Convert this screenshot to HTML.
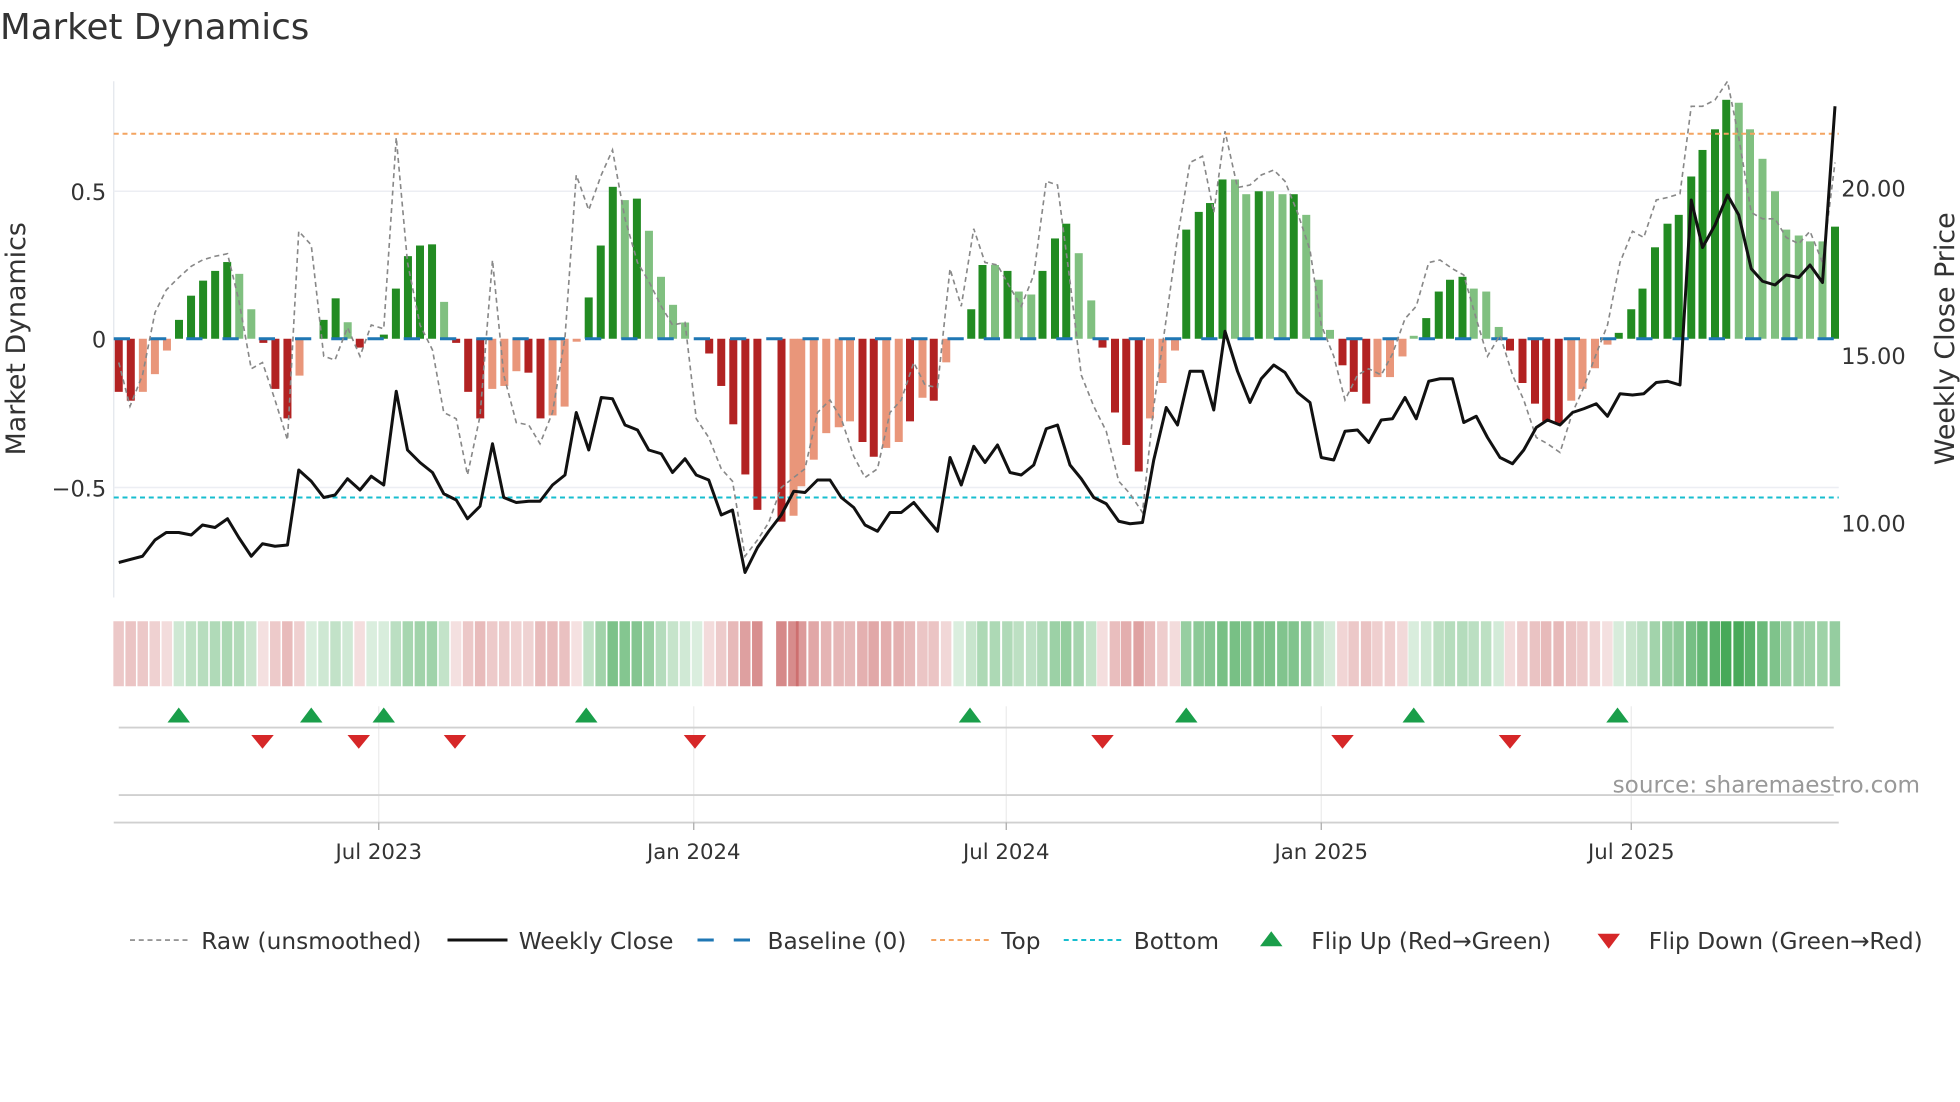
<!DOCTYPE html>
<html><head><meta charset="utf-8">
<style>
html,body{margin:0;padding:0;background:#fff;}
svg{display:block;}
text{font-family:"DejaVu Sans","Liberation Sans",sans-serif;fill:#333;}
</style></head>
<body>
<svg id="c" width="1960" height="1102" viewBox="0 0 1568 881.6" xmlns="http://www.w3.org/2000/svg">
<rect width="1568" height="882" fill="#fff"/>
<text x="0" y="31" font-size="28.5">Market Dynamics</text>
<line x1="91" y1="65" x2="91" y2="478" stroke="#e3e6ec" stroke-width="1"/>
<line x1="91" y1="153" x2="1471" y2="153" stroke="#eceef3" stroke-width="1.2"/>
<line x1="91" y1="390" x2="1471" y2="390" stroke="#eceef3" stroke-width="1.2"/>
<g id="bars"></g>
<line x1="91" y1="271" x2="1471" y2="271" stroke="#1f77b4" stroke-width="2.4" stroke-dasharray="13,16"/>
<line x1="91" y1="107" x2="1471" y2="107" stroke="#f4a460" stroke-width="1.6" stroke-dasharray="4,3"/>
<line x1="91" y1="398" x2="1471" y2="398" stroke="#17becf" stroke-width="1.6" stroke-dasharray="4,3"/>
<polyline id="raw" fill="none" stroke="#888" stroke-width="1.3" stroke-dasharray="4,3"/>
<polyline id="close" fill="none" stroke="#111" stroke-width="2.4" stroke-linejoin="round"/>
<text x="85" y="160" font-size="18" text-anchor="end">0.5</text>
<text x="85" y="278" font-size="18" text-anchor="end">0</text>
<text x="85" y="397" font-size="18" text-anchor="end">−0.5</text>
<text x="1473" y="157" font-size="18">20.00</text>
<text x="1473" y="291" font-size="18">15.00</text>
<text x="1473" y="425" font-size="18">10.00</text>
<text transform="translate(20,271) rotate(-90)" font-size="21.5" text-anchor="middle">Market Dynamics</text>
<text transform="translate(1563,271) rotate(-90)" font-size="21.5" text-anchor="middle">Weekly Close Price</text>
<g id="heat"></g>
<g stroke="#ececec" stroke-width="1">
<line x1="303" y1="565" x2="303" y2="658"/><line x1="555" y1="565" x2="555" y2="658"/><line x1="805" y1="565" x2="805" y2="658"/><line x1="1057" y1="565" x2="1057" y2="658"/><line x1="1305" y1="565" x2="1305" y2="658"/>
</g>
<line x1="95" y1="582" x2="1467" y2="582" stroke="#d0d0d0" stroke-width="1.5"/>
<line x1="95" y1="636" x2="1467" y2="636" stroke="#d0d0d0" stroke-width="1.5"/>
<line x1="91" y1="658" x2="1471" y2="658" stroke="#d0d0d0" stroke-width="1.5"/>
<g stroke="#aaa" stroke-width="1">
<line x1="303" y1="658" x2="303" y2="664"/><line x1="555" y1="658" x2="555" y2="664"/><line x1="805" y1="658" x2="805" y2="664"/><line x1="1057" y1="658" x2="1057" y2="664"/><line x1="1305" y1="658" x2="1305" y2="664"/>
</g>
<g id="tri"></g>
<text x="1536" y="634" font-size="18.5" text-anchor="end" style="fill:#999">source: sharemaestro.com</text>
<g font-size="17">
<text x="303" y="687" text-anchor="middle">Jul 2023</text>
<text x="555" y="687" text-anchor="middle">Jan 2024</text>
<text x="805" y="687" text-anchor="middle">Jul 2024</text>
<text x="1057" y="687" text-anchor="middle">Jan 2025</text>
<text x="1305" y="687" text-anchor="middle">Jul 2025</text>
</g>
<g font-size="18.6">
<line x1="104" y1="752" x2="150" y2="752" stroke="#888" stroke-width="1.3" stroke-dasharray="4,3"/>
<text x="161" y="759">Raw (unsmoothed)</text>
<line x1="358" y1="752" x2="406" y2="752" stroke="#111" stroke-width="2.4"/>
<text x="415" y="759">Weekly Close</text>
<line x1="558" y1="752" x2="604" y2="752" stroke="#1f77b4" stroke-width="2.4" stroke-dasharray="13,16"/>
<text x="614" y="759">Baseline (0)</text>
<line x1="745" y1="752" x2="791" y2="752" stroke="#f4a460" stroke-width="1.6" stroke-dasharray="4,3"/>
<text x="801" y="759">Top</text>
<line x1="851" y1="752" x2="897" y2="752" stroke="#17becf" stroke-width="1.6" stroke-dasharray="4,3"/>
<text x="907" y="759">Bottom</text>
<polygon points="1008,757 1026,757 1017,745" fill="#1a9e4a"/>
<text x="1049" y="759">Flip Up (Red→Green)</text>
<polygon points="1278,747 1296,747 1287,759" fill="#d62728"/>
<text x="1319" y="759">Flip Down (Green→Red)</text>
</g>
</svg>
<script>
var NS="http://www.w3.org/2000/svg";
function el(t,a,p){var e=document.createElementNS(NS,t);for(var k in a)e.setAttribute(k,a[k]);p.appendChild(e);return e;}
var first=[[-.18,1],[-.21,1],[-.18,0],[-.12,0],[-.04,0],[.064,1],[.146,1],[.197,1],[.23,1],[.26,1],[.22,0],[.10,0],[-.014,1],[-.17,1],[-.27,1],[-.125,0],[0,0],[.064,1],[.137,1],[.056,0],[-.03,1],[0,0],[.014,1],[.17,1],[.28,1],[.316,1],[.32,1],[.125,0],[-.014,1],[-.18,1],[-.27,1],[-.17,0],[-.16,0],[-.11,0],[-.115,1],[-.27,1],[-.26,0],[-.23,0],[-.01,0],[.14,1],[.316,1],[.515,1],[.47,0],[.475,1],[.366,0],[.21,0],[.115,0],[.055,0],[0,0],[-.05,1],[-.16,1],[-.29,1],[-.46,1],[-.58,1],null,[-.62,1],[-.60,0]];
var sec=[[641,-.5,0],[651,-.41,0],[661,-.32,0],[671,-.3,0],[680,-.28,0],[690,-.35,1],[699,-.4,1],[709,-.37,0],[719,-.35,0],[728,-.28,1],[738,-.2,0],[747,-.21,1],[757,-.08,0],[767,0,0],[777,.1,1],[786,.25,1],[796,.25,0],[806,.23,1],[815,.16,0],[825,.15,0],[834,.23,1],[844,.34,1],[853,.39,1],[863,.29,0],[873,.13,0],[882,-.03,1],[892,-.25,1],[901,-.36,1],[911,-.45,1],[920,-.27,0],[930,-.15,0],[940,-.04,0],[949,.37,1],[959,.43,1],[968,.46,1],[978,.54,1],[988,.54,0],[997,.49,0],[1007,.5,1],[1016,.5,0],[1026,.49,0],[1035,.49,1],[1045,.42,0],[1055,.2,0],[1064,.03,0],[1074,-.09,1],[1083,-.18,1],[1093,-.22,1],[1102,-.13,0],[1112,-.13,0],[1122,-.06,0],[1131,.01,0],[1141,.07,1],[1151,.16,1],[1160,.2,1],[1170,.21,1],[1179,.17,0],[1189,.16,0],[1199,.04,0],[1208,-.04,1],[1218,-.15,1],[1228,-.22,1],[1237,-.28,1],[1247,-.29,1],[1257,-.21,0],[1266,-.17,0],[1276,-.1,0],[1286,-.02,0],[1295,.02,1],[1305,.1,1],[1314,.17,1],[1324,.31,1],[1334,.39,1],[1343,.42,1],[1353,.55,1],[1362,.64,1],[1372,.71,1],[1381,.81,1],[1391,.8,0],[1400,.71,0],[1410,.61,0],[1420,.5,0],[1429,.37,0],[1439,.35,0],[1448,.33,0],[1458,.33,0],[1468,.38,1]];
var bars=[];
first.forEach(function(b,i){bars.push(b?[95+9.64*i,b[0],b[1]]:null);});
sec.forEach(function(b){bars.push(b);});
var gb=document.getElementById('bars'),gh=document.getElementById('heat');
bars.forEach(function(b,i){
 if(!b) return;
 var x=b[0],v=b[1],d=b[2];
 if(v!==0){
  var h=Math.abs(v)*236,y=v>0?271-h:271;
  var c=v>0?(d?'#228b22':'#80c080'):(d?'#b22222':'#e9967a');
  el('rect',{x:x-3.2,y:y,width:6.4,height:h,fill:c},gb);
 }
 var a=Math.min(1,0.18+Math.abs(v)*0.9);
 var hc=v>=0?'rgba(52,160,72,'+a+')':'rgba(200,95,95,'+a+')';
 el('rect',{x:x-4.3,y:497,width:8.4,height:52,fill:hc},gh);
});
var close=[[95,450],[114,445],[124,432],[133,426],[143,426],[153,428],[162,420],[172,422],[182,415],[191,430],[201,445],[210,435],[220,437],[230,436],[239,376],[249,385],[259,398],[268,396],[278,383],[288,392],[297,381],[307,388],[317,313],[326,360],[336,370],[346,378],[355,395],[365,400],[374,415],[384,405],[394,355],[403,398],[413,402],[423,401],[432,401],[442,388],[452,380],[461,330],[471,360],[481,318],[490,319],[500,340],[510,344],[519,360],[529,363],[538,378],[548,367],[557,380],[567,384],[577,412],[586,408],[596,458],[606,438],[615,425],[625,412],[635,393],[644,394],[654,384],[664,384],[673,398],[683,406],[692,420],[702,425],[712,410],[721,410],[731,402],[740,413],[750,425],[760,366],[769,388],[779,357],[788,370],[798,356],[808,378],[817,380],[827,372],[837,343],[846,340],[856,372],[865,383],[875,398],[885,403],[895,417],[904,419],[914,418],[923,368],[933,326],[942,340],[952,297],[962,297],[971,328],[980,265],[990,297],[1000,322],[1009,303],[1019,292],[1028,298],[1038,314],[1048,322],[1057,366],[1067,368],[1076,345],[1086,344],[1095,354],[1105,336],[1114,335],[1124,318],[1133,335],[1143,305],[1152,303],[1162,303],[1171,338],[1181,333],[1190,350],[1200,366],[1210,371],[1219,360],[1229,342],[1238,336],[1248,340],[1258,330],[1267,327],[1277,323],[1286,333],[1296,315],[1306,316],[1315,315],[1325,306],[1334,305],[1344,308],[1353,160],[1362,198],[1372,180],[1382,156],[1391,172],[1401,215],[1410,225],[1420,228],[1429,220],[1439,222],[1448,212],[1458,226],[1468,85]];
var raw=[[95,290],[104,325],[114,300],[124,250],[133,232],[143,222],[153,213],[162,208],[172,205],[182,203],[191,240],[201,295],[210,290],[220,320],[230,352],[239,185],[249,196],[259,285],[268,288],[278,262],[288,285],[297,260],[307,263],[317,110],[326,210],[336,260],[346,280],[355,330],[365,335],[374,380],[384,333],[394,208],[403,300],[413,338],[423,340],[432,355],[442,330],[452,270],[461,140],[471,168],[481,140],[490,120],[500,175],[510,210],[519,225],[529,245],[538,260],[548,258],[557,335],[567,350],[577,375],[586,385],[596,445],[606,432],[615,418],[625,390],[635,382],[644,375],[654,330],[664,320],[673,335],[683,365],[692,382],[702,375],[712,330],[721,320],[731,290],[740,308],[750,310],[760,215],[769,245],[779,183],[788,210],[798,212],[808,230],[817,245],[827,220],[837,145],[846,148],[856,225],[865,300],[875,325],[885,345],[895,385],[904,395],[914,410],[923,325],[933,255],[942,190],[952,130],[962,125],[971,170],[980,105],[990,150],[1000,148],[1009,140],[1019,136],[1028,145],[1038,170],[1048,200],[1057,260],[1067,285],[1076,320],[1086,300],[1095,295],[1105,300],[1114,283],[1124,255],[1133,245],[1143,210],[1152,208],[1162,215],[1171,220],[1181,255],[1190,285],[1200,268],[1210,300],[1219,320],[1229,350],[1238,355],[1248,362],[1258,330],[1267,310],[1277,283],[1286,260],[1296,210],[1306,185],[1315,190],[1325,160],[1334,158],[1344,155],[1353,85],[1362,85],[1372,80],[1382,65],[1391,110],[1401,170],[1410,175],[1420,175],[1429,190],[1439,195],[1448,185],[1458,210],[1468,130]];
document.getElementById('close').setAttribute('points',close.map(function(p){return p.join(',')}).join(' '));
document.getElementById('raw').setAttribute('points',raw.map(function(p){return p.join(',')}).join(' '));
var gt=document.getElementById('tri');
[143,249,307,469,776,949,1131,1294].forEach(function(x){el('polygon',{points:(x-9)+',578 '+(x+9)+',578 '+x+',566',fill:'#1a9e4a'},gt);});
[210,287,364,556,882,1074,1208].forEach(function(x){el('polygon',{points:(x-9)+',588 '+(x+9)+',588 '+x+',599',fill:'#d62728'},gt);});
</script>
</body></html>
